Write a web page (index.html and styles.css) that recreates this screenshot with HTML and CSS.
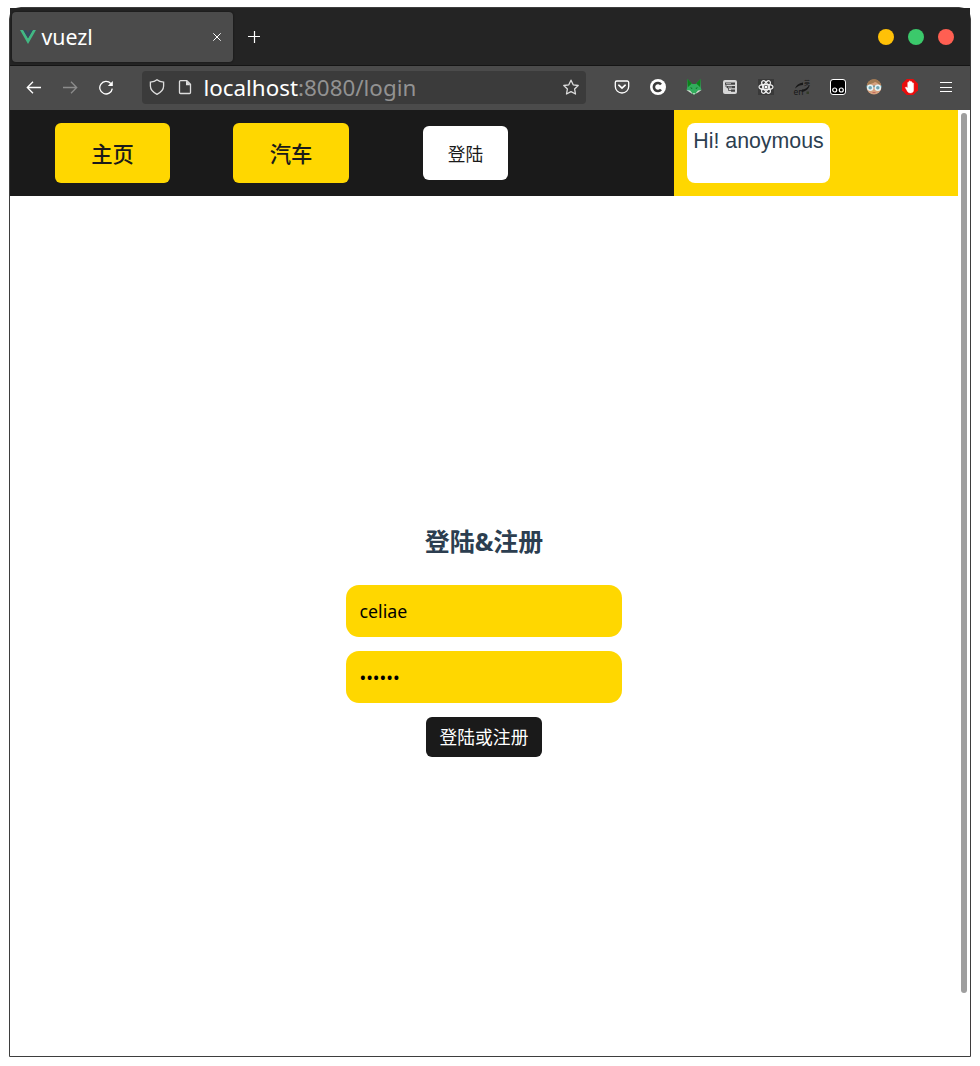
FILE: index.html
```html
<!DOCTYPE html>
<html lang="zh-CN">
<head>
<meta charset="utf-8">
<title>vuezl</title>
<link rel="stylesheet" href="styles.css">
</head>
<body>
<div class="window">
  <header class="tabbar">
    <div class="tab">
      <svg class="favicon" viewBox="0 0 16 16"><path d="M0 1h3.2L8 9.3 12.8 1H16L8 15z" fill="#42b883"/><path d="M3.2 1h3L8 4.1 9.8 1h3L8 9.3z" fill="#35495e"/></svg>
      <span class="tab-title">vuezl</span>
      <svg class="tab-close" viewBox="0 0 8 8"><path d="M.3.3l7.4 7.4M7.7.3L.3 7.7" stroke="#fff" fill="none"/></svg>
    </div>
    <svg class="new-tab" viewBox="0 0 12 12"><path d="M6.500 0v12M0 5.500h12" stroke="#fff" stroke-width="1.2"/></svg>
    <div class="controls"><i class="dot amber"></i><i class="dot green"></i><i class="dot red"></i></div>
  </header>
  <div class="toolbar">
    <svg class="icon line" viewBox="0 0 16 16"><path d="M15 8.500H1.500M7 2.800L1.300 8.500 7 14.200"/></svg>
    <svg class="icon line dim" viewBox="0 0 16 16"><path d="M1 8.500h13.500M9 2.800L14.700 8.500 9 14.200"/></svg>
    <svg class="icon line" viewBox="0 0 16 16"><path d="M14.300 9.700A6.300 6.300 0 1 1 12.800 4.500"/><path d="M14.800 2v5H9.800z" fill="#fff" stroke="none"/></svg>
    <div class="address">
      <svg class="icon line soft" viewBox="0 0 16 16"><path d="M8 .8C6.400 2.200 4 3 1.400 3.200V7c0 3.700 3 6.500 6.600 8.300 3.600-1.800 6.600-4.600 6.600-8.300V3.200C12 3 9.600 2.200 8 .8z"/></svg>
      <svg class="icon line soft" viewBox="0 0 16 16"><path d="M3.500 1.600h6.300l3.700 3.700v8.200a1 1 0 0 1-1 1h-9a1 1 0 0 1-1-1V2.600a1 1 0 0 1 1-1z"/><path d="M9 1.500v4.700h4.700z" fill="#ddd" stroke="none"/></svg>
      <span class="url">localhost<span class="path">:8080/login</span></span>
      <svg class="icon line soft" viewBox="0 0 16 16"><path d="M8 1.200l2.200 4.600 5 .7-3.600 3.500.9 5L8 12.600l-4.500 2.400.9-5L.8 6.500l5-.7z" stroke-linejoin="round"/></svg>
    </div>
    <svg class="icon line" viewBox="0 0 16 16"><path d="M2.800 2h10.400a1.500 1.500 0 0 1 1.500 1.500v4a6.700 6.500 0 0 1-13.400 0v-4A1.500 1.500 0 0 1 2.800 2z"/><path d="M4.800 6.200L8 9.200l3.200-3" stroke-width="1.600" stroke-linecap="round"/></svg>
    <svg class="icon" viewBox="0 0 16 16"><circle cx="8" cy="8" r="8" fill="#fff"/><path d="M11 5.500a4 4 0 1 0 0 5" fill="none" stroke="#3c3c3c" stroke-width="2.600"/></svg>
    <svg class="icon" viewBox="0 0 16 16"><path d="M1.500 0l4.800 5h3.400l4.800-5 .2 8 .8 3-3.500 1.500L8 16l-4-3.500L.5 11l.8-3z" fill="#32ad5c"/><path d="M1.500 0l4.300 4.500L2 8zM14.500 0l-4.300 4.500L14 8z" fill="#0b8219"/><path d="M4 8.300l2.500.7-.8 1zM12 8.300L9.500 9l.8 1z" fill="#0b6a20"/><path d="M.5 11l3.500.5 3 3.500-3-1.500zM15.500 11l-3.500.5L9 15l3-1.500zM7 14h2l-1 2z" fill="#d5ddd5"/></svg>
    <svg class="icon" viewBox="0 0 16 16"><rect x="1" y="1" width="14" height="14" rx="2" fill="#d7d7d7"/><path d="M3 3.500h10v2.200H3zM5 7h8v2.200H5zM9 10.500h4v2.200H9z" fill="#444"/><path d="M4 5v3h2.500v3.500H10" fill="none" stroke="#444" stroke-width=".8"/><path d="M4 4.600h5M6 8.100h4" stroke="#d7d7d7" stroke-width=".7"/></svg>
    <svg class="icon" viewBox="0 0 16 16"><path d="M0 0h16v16H0z" fill="#393939"/><g fill="none" stroke="#eee" stroke-width="1.200"><ellipse cx="8" cy="8" rx="7" ry="2.700"/><ellipse cx="8" cy="8" rx="7" ry="2.700" transform="rotate(60 8 8)"/><ellipse cx="8" cy="8" rx="7" ry="2.700" transform="rotate(120 8 8)"/></g><circle cx="8" cy="8" r="1.500" fill="#fff"/></svg>
    <svg class="icon overflow" viewBox="0 0 16 16"><path d="M1 9.500C2 6 5 4 9 3.500v2.500C6 6 4 7 1 9.500zM15.500 6c-.5 4-3.500 6.500-8 7l.5-2.500c3 0 5.500-1.800 7.500-4.500z" fill="#181818"/><text x="-.5" y="16" class="glyph-en">en</text><text x="10" y="5.500" class="glyph-zh">英</text><path d="M12.500 12.500h2.500v2.500h-2.500z" fill="#333b28"/></svg>
    <svg class="icon" viewBox="0 0 16 16"><rect x=".5" y=".5" width="15" height="15" rx="2.500" fill="#000" stroke="#fff"/><g fill="#000" stroke="#fff" stroke-width="1.200"><circle cx="4.700" cy="11" r="2"/><circle cx="11.300" cy="11" r="2"/></g></svg>
    <svg class="icon" viewBox="0 0 16 16"><circle cx="8" cy="8" r="7.500" fill="#d6a17e"/><path d="M1 6.500C1.500 2 5 .3 8 .3s6.500 1.700 7 6.200C12.500 5.500 11 3.500 9 3 7 4.500 4 5 1 6.500z" fill="#a27a52"/><path d="M0 7.500h16" stroke="#4d8790" stroke-width="1.500"/><g fill="#6fa5b3" stroke="#e6f3f5" stroke-width="1.500"><circle cx="4.200" cy="8.800" r="2.500"/><circle cx="11.800" cy="8.800" r="2.500"/></g><path d="M6.500 13.500h3" stroke="#c66b5d"/></svg>
    <svg class="icon" viewBox="0 0 16 16"><path d="M4.700 0h6.600L16 4.700v6.600L11.300 16H4.700L0 11.300V4.700z" fill="#e90d0d"/><path d="M4.200 8l1.500 1V3.500q.7-1 1.400 0V2.300q.8-1 1.500 0v.7q.9-1 1.500 0v1.200q.9-.9 1.500 0V11c0 2-1.300 3-3.200 3-2 0-3-1.300-3.700-3L3.300 8.700q.2-.8.9-.7z" fill="#fff" stroke="#fff" stroke-width=".4"/></svg>
    <svg class="icon line" viewBox="0 0 16 16"><path d="M2 3.500h12M2 8.500h12M2 12.500h12" stroke-width="1"/></svg>
  </div>
  <div class="viewport">
    <main class="page">
      <nav class="nav">
        <div class="links">
          <button class="link">主页</button>
          <button class="link wide">汽车</button>
          <button class="login">登陆</button>
        </div>
        <div class="user"><div class="greeting">Hi! anoymous</div></div>
      </nav>
      <form class="form">
        <h3 class="heading">登陆&amp;注册</h3>
        <input class="field" type="text" value="celiae">
        <div class="field secret">••••••</div>
        <button class="submit" type="button">登陆或注册</button>
      </form>
    </main>
    <div class="scrollbar"><div class="thumb"></div></div>
  </div>
</div>
</body>
</html>
```
FILE: styles.css
```css
* { box-sizing: border-box; }
body { margin: 0; background: #fff; font-family: "Noto Sans", "Noto Sans CJK SC", sans-serif; }
button, input { font: inherit; border: 0; margin: 0; }
svg { display: block; flex: none; }
.window { width: 962px; height: 1050px; margin: 7px 0 0 9px; border: 1px solid #3e3e3e; border-radius: 12px 12px 0 0; display: flex; flex-direction: column; }
.tabbar { height: 58px; padding: 4px 16px 4px 2px; display: flex; align-items: center; background: #242424; border-bottom: 1px solid #151515; }
.tab { width: 221px; height: 50px; padding: 0 12px 0 8px; display: flex; align-items: center; border-radius: 4px; background: #4b4b4b; box-shadow: 0 0 2px #111; }
.favicon { width: 16px; height: 16px; }
.tab-title { flex: 1; margin-left: 5.5px; font-size: 21.333px; line-height: 50px; color: #fff; }
.tab-close { width: 8px; height: 8px; }
.new-tab { width: 12px; height: 12px; margin-left: 15px; }
.controls { display: flex; gap: 14px; margin-left: auto; }
.dot { width: 16px; height: 16px; border-radius: 50%; }
.amber { background: #ffc107; }
.green { background: #3bc96b; }
.red { background: #ff5f52; }
.toolbar { height: 44px; padding: 0 16px 1px; display: flex; align-items: center; gap: 20px; background: #4b4b4b; }
.icon { width: 16px; height: 16px; margin-bottom: 1px; }
.line { fill: none; stroke: #fff; stroke-width: 1.3; }
.soft { stroke: #ddd; }
.dim { stroke: #8c8c8c; }
.overflow { overflow: visible; }
.glyph-en { font-size: 8.5px; fill: #181818; }
.glyph-zh { font-size: 6px; fill: #181818; }
.address { width: 444px; height: 33px; margin: 0 8px; padding: 0 7px; display: flex; align-items: center; gap: 12px; border-radius: 4px; background: #3b3b3b; }
.url { flex: 1; margin-left: -1.6px; font-size: 22.4px; line-height: 33px; color: #fff; white-space: nowrap; }
.path { color: #929292; }
.viewport { flex: 1; display: flex; background: #fff; }
.page { width: 948px; display: flex; flex-direction: column; }
.nav { height: 86px; display: flex; background: #1a1a1a; }
.links { width: 664px; display: flex; align-items: center; padding-left: 45px; }
.link { width: 115px; height: 60px; margin-right: 63px; padding: 0 0 2px; border-radius: 6px; background: gold; color: #1a1a1a; font-size: 21.333px; font-weight: 500; }
.wide { width: 116px; margin-right: 74px; }
.login { width: 85px; height: 54px; padding: 0; border-radius: 6px; background: #fff; color: #1a1a1a; font-size: 17.777px; }
.user { width: 284px; padding: 13px; display: flex; background: gold; }
.greeting { width: 143px; height: 60px; padding-top: 6px; border-radius: 8px; background: #fff; color: #2c3e50; font: 21.333px/25px "Liberation Sans", sans-serif; text-align: center; }
.form { display: flex; flex-direction: column; align-items: center; padding-top: 327px; }
.heading { margin: 0 0 25px; color: #2c3e50; font-size: 24.96px; line-height: 37px; }
.field { width: 276px; height: 52px; margin-bottom: 14px; padding: 0 13.5px; border-radius: 13px; background: gold; color: #000; font-size: 17.777px; line-height: 52px; outline: 0; }
.submit { width: 116px; height: 40px; padding: 0 0 2px; border-radius: 6px; background: #1a1a1a; color: #fff; font-size: 17.777px; }
.scrollbar { width: 12px; padding: 3px; }
.thumb { width: 6px; height: 880px; border-radius: 3px; background: #9e9e9e; }
```
